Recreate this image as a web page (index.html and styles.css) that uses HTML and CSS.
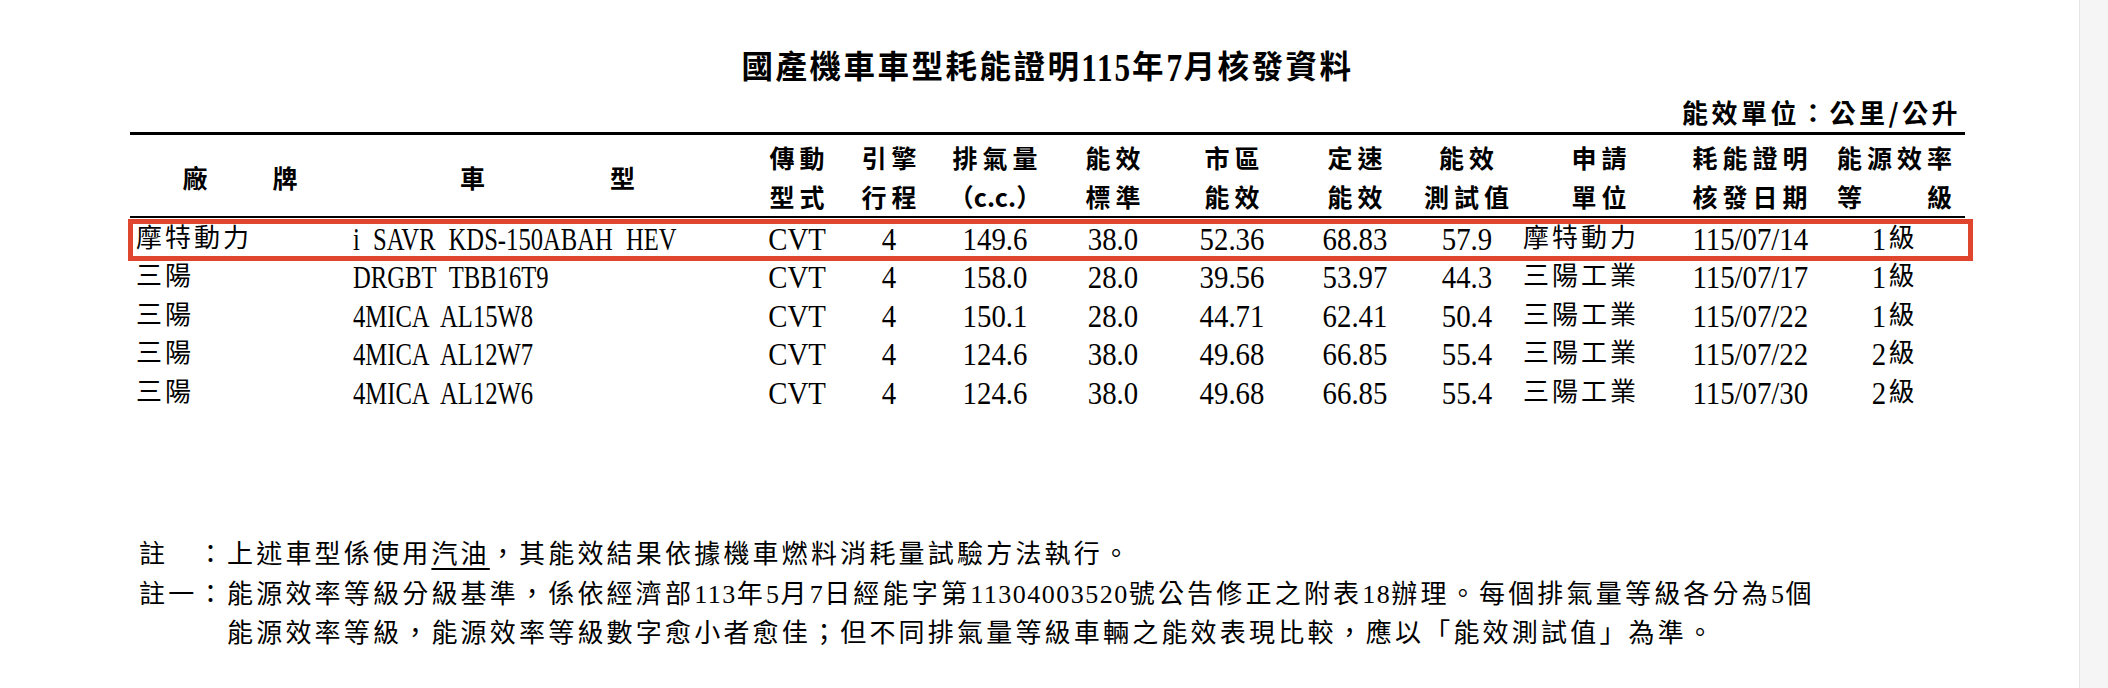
FILE: index.html
```html
<!DOCTYPE html>
<html lang="zh-Hant">
<head>
<meta charset="utf-8">
<title>國產機車車型耗能證明115年7月核發資料</title>
<link rel="stylesheet" href="styles.css">
</head>
<body>
<div class="screen">
  <main class="sheet">
    <h1 class="title">國產機車車型耗能證明<span class="tn tn3">115</span>年<span class="tn tn1">7</span>月核發資料</h1>
    <div class="units">能效單位：公里/公升</div>
    <section class="table">
      <div class="thead">
        <div class="span2">廠　　牌</div>
        <div class="span2">車　　　　型</div>
        <div>傳動</div>
        <div>引擎</div>
        <div>排氣量</div>
        <div>能效</div>
        <div>市區</div>
        <div>定速</div>
        <div>能效</div>
        <div>申請</div>
        <div>耗能證明</div>
        <div>能源效率</div>
        <div class="r2">型式</div>
        <div class="r2">行程</div>
        <div class="r2 cc">（c.c.）</div>
        <div class="r2">標準</div>
        <div class="r2">能效</div>
        <div class="r2">能效</div>
        <div class="r2">測試值</div>
        <div class="r2">單位</div>
        <div class="r2">核發日期</div>
        <div class="r2">等　　級</div>
      </div>
      <div class="tbody">
        <div class="row">
          <div class="l1">摩特動力</div>
          <div class="l2 m"><span>i SAVR KDS-150ABAH HEV</span></div>
          <div class="n"><span>CVT</span></div>
          <div class="n"><span>4</span></div>
          <div class="n"><span>149.6</span></div>
          <div class="n"><span>38.0</span></div>
          <div class="n"><span>52.36</span></div>
          <div class="n"><span>68.83</span></div>
          <div class="n"><span>57.9</span></div>
          <div class="l3">摩特動力</div>
          <div class="n"><span>115/07/14</span></div>
          <div><span class="g">1</span>級</div>
        </div>
        <div class="row">
          <div class="l1">三陽</div>
          <div class="l2 m"><span>DRGBT TBB16T9</span></div>
          <div class="n"><span>CVT</span></div>
          <div class="n"><span>4</span></div>
          <div class="n"><span>158.0</span></div>
          <div class="n"><span>28.0</span></div>
          <div class="n"><span>39.56</span></div>
          <div class="n"><span>53.97</span></div>
          <div class="n"><span>44.3</span></div>
          <div class="l3">三陽工業</div>
          <div class="n"><span>115/07/17</span></div>
          <div><span class="g">1</span>級</div>
        </div>
        <div class="row">
          <div class="l1">三陽</div>
          <div class="l2 m"><span>4MICA AL15W8</span></div>
          <div class="n"><span>CVT</span></div>
          <div class="n"><span>4</span></div>
          <div class="n"><span>150.1</span></div>
          <div class="n"><span>28.0</span></div>
          <div class="n"><span>44.71</span></div>
          <div class="n"><span>62.41</span></div>
          <div class="n"><span>50.4</span></div>
          <div class="l3">三陽工業</div>
          <div class="n"><span>115/07/22</span></div>
          <div><span class="g">1</span>級</div>
        </div>
        <div class="row">
          <div class="l1">三陽</div>
          <div class="l2 m"><span>4MICA AL12W7</span></div>
          <div class="n"><span>CVT</span></div>
          <div class="n"><span>4</span></div>
          <div class="n"><span>124.6</span></div>
          <div class="n"><span>38.0</span></div>
          <div class="n"><span>49.68</span></div>
          <div class="n"><span>66.85</span></div>
          <div class="n"><span>55.4</span></div>
          <div class="l3">三陽工業</div>
          <div class="n"><span>115/07/22</span></div>
          <div><span class="g">2</span>級</div>
        </div>
        <div class="row">
          <div class="l1">三陽</div>
          <div class="l2 m"><span>4MICA AL12W6</span></div>
          <div class="n"><span>CVT</span></div>
          <div class="n"><span>4</span></div>
          <div class="n"><span>124.6</span></div>
          <div class="n"><span>38.0</span></div>
          <div class="n"><span>49.68</span></div>
          <div class="n"><span>66.85</span></div>
          <div class="n"><span>55.4</span></div>
          <div class="l3">三陽工業</div>
          <div class="n"><span>115/07/30</span></div>
          <div><span class="g">2</span>級</div>
        </div>
        <div class="mark"></div>
      </div>
    </section>
    <section class="notes">
      <div class="note">
        <div class="lab">註　：</div>
        <div class="txt">上述車型係使用<span class="u">汽油</span>，其能效結果依據機車燃料消耗量試驗方法執行。</div>
      </div>
      <div class="note">
        <div class="lab">註一：</div>
        <div class="txt">能源效率等級分級基準，係依經濟部<span class="d">113</span>年<span class="d">5</span>月<span class="d">7</span>日經能字第<span class="d">11304003520</span>號公告修正之附表<span class="d">18</span>辦理。每個排氣量等級各分為<span class="d">5</span>個<br>能源效率等級，能源效率等級數字愈小者愈佳；但不同排氣量等級車輛之能效表現比較，應以「能效測試值」為準。</div>
      </div>
    </section>
  </main>
  <div class="edge"></div>
</div>
</body>
</html>
```

FILE: styles.css
```css
html, body {
  margin: 0;
  padding: 0;
  background: #ffffff;
  color: #000000;
}

.screen {
  display: flex;
  width: 2108px;
  height: 688px;
  overflow: hidden;
}

.sheet {
  flex: none;
  width: 1835px;
  margin-left: 130px;
  padding-top: 47px;
  font-family: "Liberation Serif", "Noto Sans CJK TC", serif;
}

.title {
  margin: 0;
  height: 41px;
  font-size: 31.5px;
  font-weight: 700;
  line-height: 41px;
  letter-spacing: 2.5px;
  text-align: center;
  white-space: nowrap;
}

.tn {
  display: inline-block;
  vertical-align: top;
  font-size: 40px;
  transform: scaleX(0.78);
}

.tn3 {
  margin: 0 -7.4px;
}

.tn1 {
  margin: 0 -2.5px;
}

.units {
  margin-top: 4px;
  height: 40px;
  padding-right: 4px;
  font-family: "Noto Sans CJK TC", sans-serif;
  font-size: 26px;
  font-weight: 700;
  line-height: 40px;
  letter-spacing: 3.5px;
  text-align: right;
  white-space: nowrap;
}

.table {
  --cols: 220px 395px 104px 80px 132px 104px 134px 112px 111px 154px 148px 141px;
  border-top: 3px solid #000;
}

.thead {
  display: grid;
  grid-template-columns: var(--cols);
  grid-template-rows: 40px 39px;
  padding-top: 2px;
  border-bottom: 2px solid #000;
  font-family: "Noto Sans CJK TC", sans-serif;
  font-size: 25px;
  font-weight: 700;
  letter-spacing: 5px;
}

.thead > div {
  padding-left: 5px;
  line-height: 40px;
  text-align: center;
  white-space: nowrap;
}

.thead > .r2 {
  line-height: 39px;
}

.thead > .span2 {
  grid-row: span 2;
  align-self: center;
}

.thead > .cc {
  letter-spacing: 0;
  padding-left: 0;
}

.tbody {
  position: relative;
  padding-top: 1.5px;
  font-size: 26px;
  letter-spacing: 3px;
}

.row {
  display: grid;
  grid-template-columns: var(--cols);
  height: 38.5px;
  line-height: 38.5px;
  white-space: nowrap;
}

.row > div {
  text-align: center;
}

.row > .l1 {
  text-align: left;
  padding-left: 6px;
}

.row > .l2 {
  text-align: left;
  padding-left: 3px;
}

.row > .l3 {
  text-align: left;
  padding-left: 1px;
}

.n,
.m {
  font-size: 32px;
  letter-spacing: 0;
}

.n span {
  display: inline-block;
  transform: scaleX(0.9);
}

.m span {
  display: inline-block;
  word-spacing: 9px;
  transform: scaleX(0.77);
  transform-origin: left center;
}

.g {
  display: inline-block;
  vertical-align: top;
  font-size: 32px;
  letter-spacing: 0;
  margin-right: 1px;
  transform: scaleX(0.9);
}

.mark {
  position: absolute;
  top: 0.5px;
  left: -2.5px;
  right: -7.5px;
  height: 42px;
  box-sizing: border-box;
  border: 5px solid #e0452d;
}

.notes {
  margin-top: 123px;
  padding-left: 9px;
  font-size: 26px;
  line-height: 39.5px;
  letter-spacing: 3.2px;
}

.note {
  display: flex;
  white-space: nowrap;
}

.note .lab {
  flex: none;
  width: 88px;
}

.u {
  text-decoration: underline;
  text-decoration-thickness: 1.5px;
  text-underline-offset: 5px;
}

.d {
  letter-spacing: 1.5px;
}

.edge {
  flex: none;
  margin-left: auto;
  width: 28px;
  background: #f5f5f5;
  border-left: 1px solid #e5e5e5;
}
```
